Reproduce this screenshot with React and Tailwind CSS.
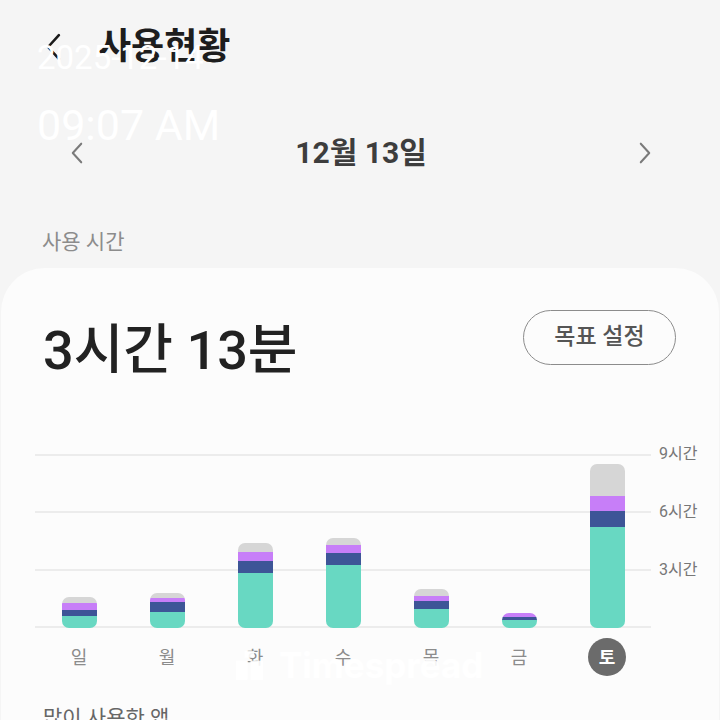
import React from "react";

const bars = [
  { day: "일", parts: [6, 7, 6, 12] },
  { day: "월", parts: [5, 4, 10, 16] },
  { day: "화", parts: [9, 9, 12, 55] },
  { day: "수", parts: [7, 8, 12, 63] },
  { day: "목", parts: [7, 5, 8, 19] },
  { day: "금", parts: [0, 4, 3, 8] },
  { day: "토", parts: [32, 15, 16, 101], active: true },
];

const partColors = ["bg-[#d6d6d6]", "bg-[#c77ef8]", "bg-[#3d5597]", "bg-[#68d8c2]"];

const Chevron = ({ dir = "left", className }) => (
  <svg viewBox="0 0 16 26" className={className} fill="none" stroke="currentColor" strokeWidth="2.4" strokeLinecap="round" strokeLinejoin="round">
    {dir === "left" ? <polyline points="13,2 3,13 13,24" /> : <polyline points="3,2 13,13 3,24" />}
  </svg>
);

const App = () => {
  return (
    <div
      className="relative w-[720px] h-[720px] overflow-hidden bg-[#f5f5f5]"
      style={{ fontFamily: "Roboto, 'Noto Sans CJK KR', sans-serif" }}
    >
      {/* header */}
      <div className="h-[90px] flex items-center pl-[44px] pt-[4px]">
        <Chevron className="w-[19px] h-[28px] text-[#1a1a1a]" />
        <h1 className="ml-[35px] text-[36px] font-bold text-[#1d1d1d] leading-none">사용현황</h1>
      </div>

      {/* date nav */}
      <div className="mt-[40px] h-[46px] flex items-center justify-between pl-[70px] pr-[68px]">
        <Chevron className="w-[14px] h-[22px] text-[#7a7a7a]" />
        <span className="text-[30px] font-bold text-[#3d3d3d] leading-none">12월 13일</span>
        <Chevron dir="right" className="w-[14px] h-[22px] text-[#7a7a7a]" />
      </div>

      <div className="mt-[52px] pl-[42px] text-[21px] leading-[28px] text-[#8c8c8c]">사용 시간</div>

      {/* card */}
      <div className="mt-[12px] mx-[1px] bg-[#fcfcfc] rounded-t-[44px] pt-[42px]">
        <div className="flex items-start justify-between pl-[42px] pr-[43px]">
          <div className="mt-[11px] text-[54px] leading-[60px] font-medium text-[#222]">3시간 13분</div>
          <button className="w-[153px] h-[55px] rounded-full border-[1.5px] border-[#8c8c8c] text-[23px] font-medium text-[#555]">
            목표 설정
          </button>
        </div>

        <div className="mt-[73px] flex pl-[34px]">
          <div className="w-[616px]">
            <div className="relative h-[174px]">
              <div className="absolute inset-0 flex flex-col">
                <div className="h-[58px] border-t-2 border-[#ececec]" />
                <div className="h-[58px] border-t-2 border-[#ececec]" />
                <div className="h-[58px] border-t-2 border-[#ececec]" />
                <div className="border-t-2 border-[#ececec]" />
              </div>
              <div className="relative h-[174px] flex items-end">
                {bars.map((b) => (
                  <div key={b.day} className="w-[88px] flex justify-center">
                    <div className="w-[35px] flex flex-col rounded-[7px] overflow-hidden">
                      {b.parts.map((h, i) =>
                        h > 0 ? <div key={i} className={partColors[i]} style={{ height: h }} /> : null
                      )}
                    </div>
                  </div>
                ))}
              </div>
            </div>
            <div className="mt-[10px] flex">
              {bars.map((b) => (
                <div key={b.day} className="w-[88px] flex justify-center">
                  {b.active ? (
                    <span className="w-[38px] h-[38px] rounded-full bg-[#6b6b6b] text-white text-[18px] font-bold flex items-center justify-center">
                      {b.day}
                    </span>
                  ) : (
                    <span className="h-[38px] flex items-center text-[18px] text-[#8c8c8c]">{b.day}</span>
                  )}
                </div>
              ))}
            </div>
          </div>
          <div className="-mt-[11px] pl-[8px] flex flex-col text-[16px] leading-[22px] text-[#777]">
            <span className="h-[58px]">9시간</span>
            <span className="h-[58px]">6시간</span>
            <span className="h-[58px]">3시간</span>
          </div>
        </div>

        <div className="mt-[28px] pl-[42px] text-[21px] leading-[28px] text-[#666]">많이 사용한 앱</div>
      </div>

      {/* timestamp watermark */}
      <div className="absolute left-[37px] top-[41px] text-white leading-none">
        <div className="text-[33px]">2025-12-14</div>
        <div className="mt-[30px] text-[43px]">09:07 AM</div>
      </div>

      {/* brand watermark */}
      <div className="absolute left-[236px] top-[648px] flex items-center gap-[16px] text-white/90">
        <svg viewBox="0 0 28 30" className="w-[27px] h-[29px]" fill="currentColor">
          <rect x="9" y="0" width="10" height="7" />
          <rect x="0" y="10" width="12" height="20" />
          <rect x="15" y="10" width="13" height="20" />
        </svg>
        <span className="text-[35px] font-bold leading-none" style={{ fontFamily: "Inter, sans-serif" }}>Timespread</span>
      </div>
    </div>
  );
};

export default App;
